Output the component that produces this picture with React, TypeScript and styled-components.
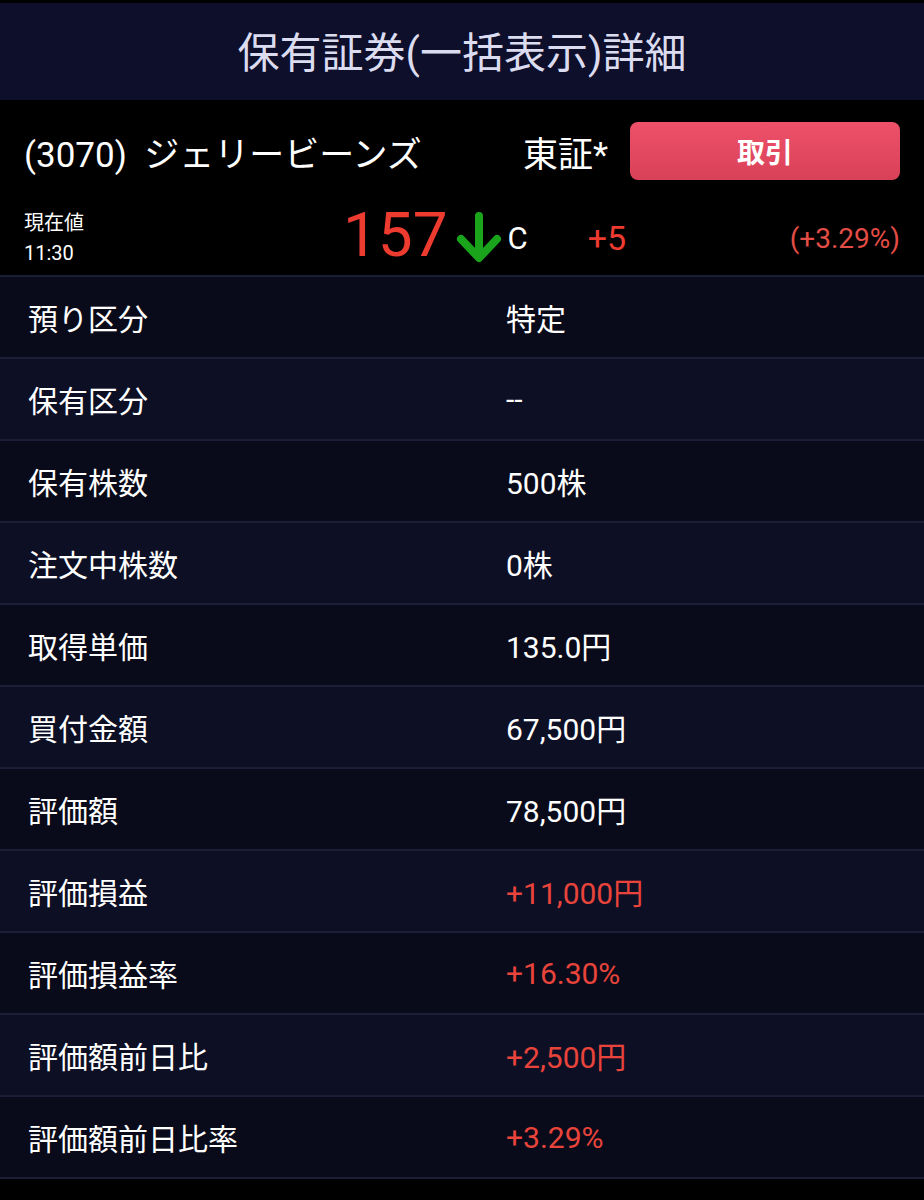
import styled, { createGlobalStyle } from "styled-components";

//#region styled css

const GlobalStyle = createGlobalStyle`
    html, body {
        margin: 0;
        padding: 0;
        background: #000;
    }
    body {
        font-family: Roboto, "Noto Sans CJK JP", sans-serif;
        color: #fff;
    }
`;

const Page = styled.div`
    width: 924px;
    min-height: 1200px;
    background: #000;
    padding-top: 3px;
    box-sizing: border-box;
`;

const Header = styled.div`
    height: 97px;
    background: #0d0f2b;
    display: flex;
    align-items: center;
    justify-content: center;
    font-size: 42px;
    color: #dcdcf0;
    padding-bottom: 4px;
    box-sizing: border-box;
`;

const StockBox = styled.div`
    background: #000;
    padding: 0 24px 0 24px;
    height: 175px;
    box-sizing: border-box;
`;

const NameRow = styled.div`
    display: flex;
    align-items: center;
    height: 102px;
    box-sizing: border-box;
`;

const StockName = styled.div`
    flex: 1;
    font-size: 35px;
    white-space: pre;
`;

const Exchange = styled.div`
    font-size: 35px;
    margin-right: 22px;
`;

const TradeBtn = styled.button`
    width: 270px;
    height: 58px;
    border: none;
    border-radius: 8px;
    background: linear-gradient(#ee5169, #d94159);
    color: #fff;
    font-family: "Noto Sans CJK JP", sans-serif;
    font-size: 28px;
    font-weight: 700;
    cursor: pointer;
`;

const PriceRow = styled.div`
    display: flex;
    align-items: center;
    height: 72px;
`;

const TimeBlock = styled.div`
    width: 319px;
    font-size: 20px;
    line-height: 30px;
`;

const Price = styled.div`
    font-size: 62px;
    color: #ee3b30;
    line-height: 1;
    margin-top: -6px;
`;

const Arrow = styled.svg`
    width: 46px;
    height: 52px;
    margin: 0 6px 0 8px;
`;

const Flag = styled.div`
    font-size: 31px;
`;

const Change = styled.div`
    font-size: 34px;
    color: #ee3b30;
    margin-left: 60px;
`;

const Percent = styled.div`
    margin-left: auto;
    font-size: 28px;
    color: #e24d45;
`;

const Table = styled.div`
    border-bottom: 2px solid #1c1e36;
`;

const Row = styled.div<{ $alt: boolean }>`
    display: grid;
    grid-template-columns: 478px 1fr;
    align-items: center;
    height: 80px;
    padding-left: 28px;
    border-top: 2px solid #1c1e36;
    background: ${(p) => (p.$alt ? "#0d0f25" : "#0a0b1a")};
    font-size: 30px;
`;

const Value = styled.div<{ $red?: boolean }>`
    color: ${(p) => (p.$red ? "#e8443b" : "#fff")};
`;
//#endregion

const rows: { label: string; value: string; red?: boolean }[] = [
    { label: "預り区分", value: "特定" },
    { label: "保有区分", value: "--" },
    { label: "保有株数", value: "500株" },
    { label: "注文中株数", value: "0株" },
    { label: "取得単価", value: "135.0円" },
    { label: "買付金額", value: "67,500円" },
    { label: "評価額", value: "78,500円" },
    { label: "評価損益", value: "+11,000円", red: true },
    { label: "評価損益率", value: "+16.30%", red: true },
    { label: "評価額前日比", value: "+2,500円", red: true },
    { label: "評価額前日比率", value: "+3.29%", red: true },
];

const App = () => {
    return (
        <>
            <GlobalStyle />
            <Page>
                <Header>保有証券(一括表示)詳細</Header>

                <StockBox>
                    <NameRow>
                        <StockName>{"(3070)  ジェリービーンズ"}</StockName>
                        <Exchange>東証*</Exchange>
                        <TradeBtn>取引</TradeBtn>
                    </NameRow>
                    <PriceRow>
                        <TimeBlock>
                            <div>現在値</div>
                            <div>11:30</div>
                        </TimeBlock>
                        <Price>157</Price>
                        <Arrow viewBox="0 0 46 52">
                            <path
                                d="M23 4 V44 M5 27 L23 46 L41 27"
                                fill="none"
                                stroke="#19a41c"
                                strokeWidth="8"
                                strokeLinecap="round"
                                strokeLinejoin="round"
                            />
                        </Arrow>
                        <Flag>C</Flag>
                        <Change>+5</Change>
                        <Percent>(+3.29%)</Percent>
                    </PriceRow>
                </StockBox>

                <Table>
                    {rows.map((r, i) => (
                        <Row key={r.label} $alt={i % 2 === 1}>
                            <div>{r.label}</div>
                            <Value $red={r.red}>{r.value}</Value>
                        </Row>
                    ))}
                </Table>
            </Page>
        </>
    );
};

export default App;
